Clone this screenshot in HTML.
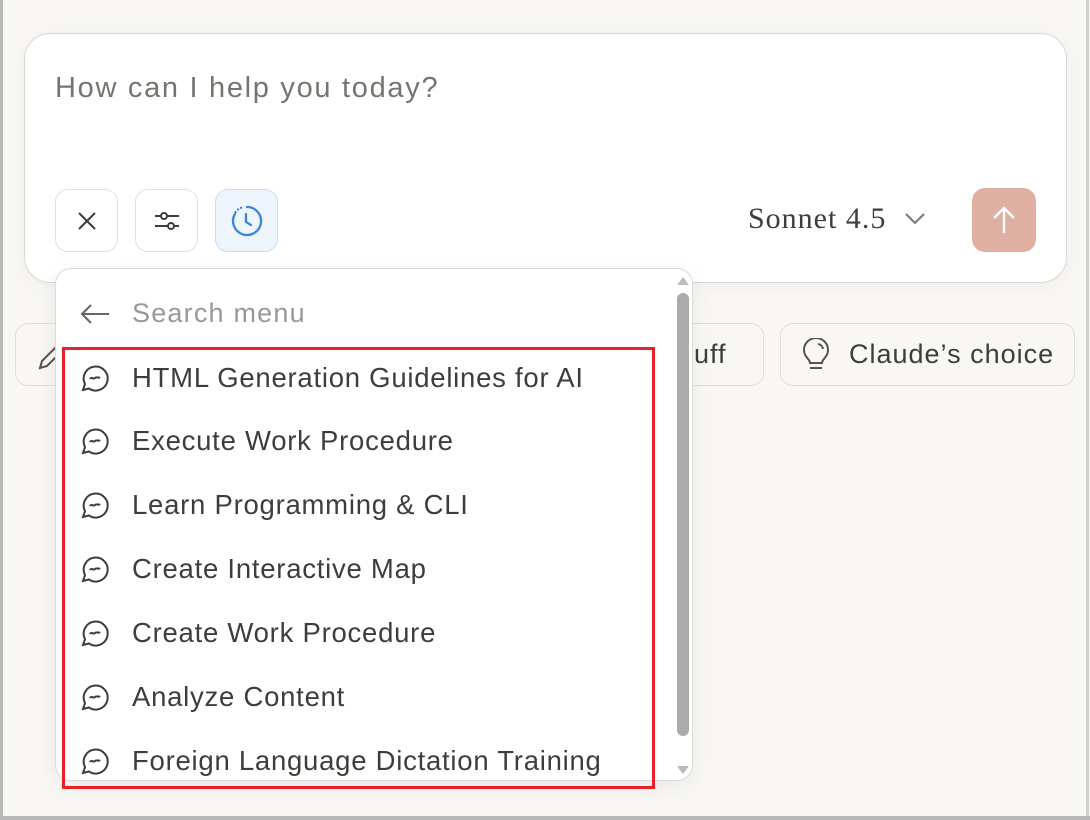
<!DOCTYPE html>
<html><head><meta charset="utf-8"><style>
*{margin:0;padding:0;box-sizing:border-box}
body{width:1090px;height:820px;background:#f8f7f4;position:relative;overflow:hidden;font-family:"Liberation Sans",sans-serif;color:#3d3d3a}
.edge{position:absolute;background:#b8b8b8}
.card{position:absolute;left:24px;top:33px;width:1043px;height:250px;background:#fff;border:1px solid #d9d7d2;border-radius:26px;box-shadow:0 4px 20px rgba(0,0,0,.04)}
.ph{position:absolute;left:55px;top:72px;font-size:29px;letter-spacing:1.7px;color:#76746f}
.btn{position:absolute;top:189px;width:63px;height:63px;border:1px solid #e2e0db;border-radius:13px;background:#fff;display:flex;align-items:center;justify-content:center}
.son{position:absolute;left:748px;top:202px;font-family:"Liberation Serif",serif;font-size:30px;letter-spacing:1px;color:#3d3d3a}
.send{position:absolute;left:972px;top:188px;width:64px;height:64px;background:#dfb0a2;border-radius:13px;display:flex;align-items:center;justify-content:center}
.chip{position:absolute;top:323px;height:63px;border:1px solid #e0ded9;border-radius:13px;background:#f8f7f4;font-size:27px;letter-spacing:1px;display:flex;align-items:center}
.dd{position:absolute;left:55px;top:268px;width:638px;height:513px;background:#fff;border:1px solid #dcdad5;border-radius:16px;box-shadow:0 6px 24px rgba(0,0,0,.06);overflow:hidden}
.item{position:absolute;left:24px;height:40px;display:flex;align-items:center;font-size:27.5px;letter-spacing:0.75px;color:#3d3d3a;white-space:nowrap}
.item svg{margin-right:20px;flex:none}
.red{position:absolute;left:62px;top:347px;width:593px;height:442px;border:3px solid #e8202a}
</style></head><body>
<div class="edge" style="left:0;top:0;width:3px;height:820px"></div>
<div class="edge" style="left:1086px;top:0;width:3px;height:820px;background:#d0d0d0"></div>
<div class="edge" style="left:0;top:816px;width:1090px;height:4px"></div>

<div class="chip" style="left:15px;width:80px"><svg style="position:absolute;left:20px;top:18px" width="30" height="30" viewBox="0 0 30 30" fill="none" stroke="#55534e" stroke-width="2"><path d="M4 26l2-7L22 3l5 5L11 24z"/></svg></div>
<div class="chip" style="left:600px;width:164px;padding-left:70px">stuff</div>
<div class="chip" style="left:780px;width:295px;padding-left:68px"><svg style="position:absolute;left:18px;top:14px" width="34" height="36" viewBox="0 0 34 36" fill="none" stroke="#55534e" stroke-width="2"><path d="M11 25c0-4-6-6-6-13a12 12 0 0 1 24 0c0 7-6 9-6 13z"/><path d="M11 30h12"/><path d="M19 6a6 6 0 0 1 5 5"/></svg>Claude’s choice</div>

<div class="card"></div>
<div class="ph">How can I help you today?</div>
<div class="btn" style="left:55px"><svg width="22" height="22" viewBox="0 0 22 22" stroke="#3d3d3a" stroke-width="2"><path d="M3 3l16 16M19 3L3 19"/></svg></div>
<div class="btn" style="left:135px"><svg width="26" height="22" viewBox="0 0 26 22" fill="none" stroke="#3d3d3a" stroke-width="2"><path d="M1 6h24M1 16h24"/><circle cx="10" cy="6" r="3" fill="#fff"/><circle cx="17" cy="16" r="3" fill="#fff"/></svg></div>
<div class="btn" style="left:215px;background:#eef4fc;border-color:#c9dcf4"><svg width="34" height="34" viewBox="0 0 34 34" fill="none" stroke="#3a86d8" stroke-width="2.3" stroke-linecap="round"><path d="M17 3a14 14 0 1 1-12.1 7"/><path d="M8 5.5l.1 0M5.5 8l0 .1M11 3.8l.1 0"/><path d="M16 10v8l5 3"/></svg></div>
<div class="son">Sonnet 4.5</div>
<svg style="position:absolute;left:904px;top:212px" width="22" height="14" viewBox="0 0 22 14" fill="none" stroke="#777" stroke-width="2"><path d="M2 2l9 9 9-9"/></svg>
<div class="send"><svg width="26" height="30" viewBox="0 0 26 30" fill="none" stroke="#fff" stroke-width="2.4"><path d="M13 28V3M3 13L13 3l10 10"/></svg></div>

<div class="dd">
 <svg style="position:absolute;left:24px;top:35px" width="30" height="20" viewBox="0 0 30 20" fill="none" stroke="#666" stroke-width="2"><path d="M29 10H2M11 1L2 10l9 9"/></svg>
 <div style="position:absolute;left:76px;top:29px;font-size:27px;letter-spacing:1.2px;color:#9a9893">Search menu</div>
 <div style="position:absolute;left:621px;top:24px;width:12px;height:443px;background:#ababab;border-radius:6px"></div>
 <div style="position:absolute;left:621px;top:8px;width:0;height:0;border-left:6px solid transparent;border-right:6px solid transparent;border-bottom:8px solid #bbb"></div>
 <div style="position:absolute;left:621px;top:497px;width:0;height:0;border-left:6px solid transparent;border-right:6px solid transparent;border-top:8px solid #bbb"></div>
 <div class="item" style="top:89px"><svg width="32" height="32" viewBox="0 0 32 32" fill="none" stroke="#3d3d3a" stroke-width="2"><path d="M9 26.5A12 12 0 1 0 5 22l-2 6z"/><path d="M10 17c2-3 3 1 5-1s3 1 5-1"/></svg>HTML Generation Guidelines for AI</div>
 <div class="item" style="top:152px"><svg width="32" height="32" viewBox="0 0 32 32" fill="none" stroke="#3d3d3a" stroke-width="2"><path d="M9 26.5A12 12 0 1 0 5 22l-2 6z"/><path d="M10 17c2-3 3 1 5-1s3 1 5-1"/></svg>Execute Work Procedure</div>
 <div class="item" style="top:216px"><svg width="32" height="32" viewBox="0 0 32 32" fill="none" stroke="#3d3d3a" stroke-width="2"><path d="M9 26.5A12 12 0 1 0 5 22l-2 6z"/><path d="M10 17c2-3 3 1 5-1s3 1 5-1"/></svg>Learn Programming &amp; CLI</div>
 <div class="item" style="top:280px"><svg width="32" height="32" viewBox="0 0 32 32" fill="none" stroke="#3d3d3a" stroke-width="2"><path d="M9 26.5A12 12 0 1 0 5 22l-2 6z"/><path d="M10 17c2-3 3 1 5-1s3 1 5-1"/></svg>Create Interactive Map</div>
 <div class="item" style="top:344px"><svg width="32" height="32" viewBox="0 0 32 32" fill="none" stroke="#3d3d3a" stroke-width="2"><path d="M9 26.5A12 12 0 1 0 5 22l-2 6z"/><path d="M10 17c2-3 3 1 5-1s3 1 5-1"/></svg>Create Work Procedure</div>
 <div class="item" style="top:408px"><svg width="32" height="32" viewBox="0 0 32 32" fill="none" stroke="#3d3d3a" stroke-width="2"><path d="M9 26.5A12 12 0 1 0 5 22l-2 6z"/><path d="M10 17c2-3 3 1 5-1s3 1 5-1"/></svg>Analyze Content</div>
 <div class="item" style="top:472px"><svg width="32" height="32" viewBox="0 0 32 32" fill="none" stroke="#3d3d3a" stroke-width="2"><path d="M9 26.5A12 12 0 1 0 5 22l-2 6z"/><path d="M10 17c2-3 3 1 5-1s3 1 5-1"/></svg>Foreign Language Dictation Training</div>
</div>
<div class="red"></div>
</body></html>
